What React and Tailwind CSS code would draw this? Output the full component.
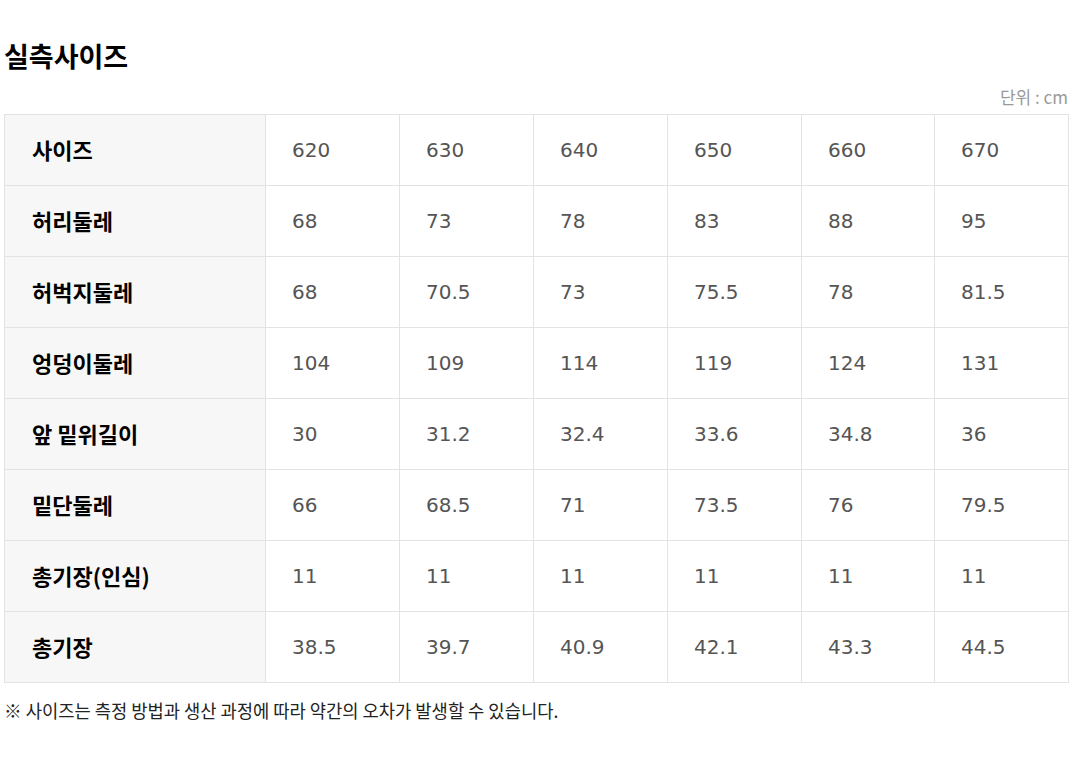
import React from "react";

const cols = ["620", "630", "640", "650", "660", "670"];

const rows = [
  ["허리둘레", ["68", "73", "78", "83", "88", "95"]],
  ["허벅지둘레", ["68", "70.5", "73", "75.5", "78", "81.5"]],
  ["엉덩이둘레", ["104", "109", "114", "119", "124", "131"]],
  ["앞 밑위길이", ["30", "31.2", "32.4", "33.6", "34.8", "36"]],
  ["밑단둘레", ["66", "68.5", "71", "73.5", "76", "79.5"]],
  ["총기장(인심)", ["11", "11", "11", "11", "11", "11"]],
  ["총기장", ["38.5", "39.7", "40.9", "42.1", "43.3", "44.5"]],
];

const ko = { fontFamily: '"Noto Sans CJK KR", "DejaVu Sans", sans-serif' };
const num = { fontFamily: '"DejaVu Sans", "Noto Sans CJK KR", sans-serif' };

function Row({ label, values }) {
  return (
    <tr className="h-[71px]">
      <th
        className="bg-[#f7f7f7] border border-[#e3e3e3] pl-[27px] pb-[2px] text-left text-[22px] font-bold text-black"
        style={ko}
      >
        {label}
      </th>
      {values.map((v, i) => (
        <td
          key={i}
          className="border border-[#e3e3e3] pl-[26px] text-left text-[20px] text-[#555]"
          style={num}
        >
          {v}
        </td>
      ))}
    </tr>
  );
}

export default function App() {
  return (
    <div className="w-[1073px] h-[762px] bg-white px-[4px] pt-[38px]">
      <h2 className="text-[27px] font-bold text-black leading-[36px]" style={ko}>
        실측사이즈
      </h2>
      <div className="flex justify-end pr-[1px] mt-[13px] h-[20px] items-center text-[17px] text-[#999]" style={ko}>
        단위 : cm
      </div>
      <table className="mt-[7px] w-[1065px] border-collapse table-fixed">
        <colgroup>
          <col className="w-[261px]" />
          <col className="w-[134px]" />
          <col className="w-[134px]" />
          <col className="w-[134px]" />
          <col className="w-[134px]" />
          <col className="w-[133px]" />
          <col className="w-[134px]" />
        </colgroup>
        <tbody>
          <Row label="사이즈" values={cols} />
          {rows.map(([label, values]) => (
            <Row key={label} label={label} values={values} />
          ))}
        </tbody>
      </table>
      <p className="mt-[14px] text-[17.7px] leading-[27px] text-[#222]" style={ko}>
        ※ 사이즈는 측정 방법과 생산 과정에 따라 약간의 오차가 발생할 수 있습니다.
      </p>
    </div>
  );
}
